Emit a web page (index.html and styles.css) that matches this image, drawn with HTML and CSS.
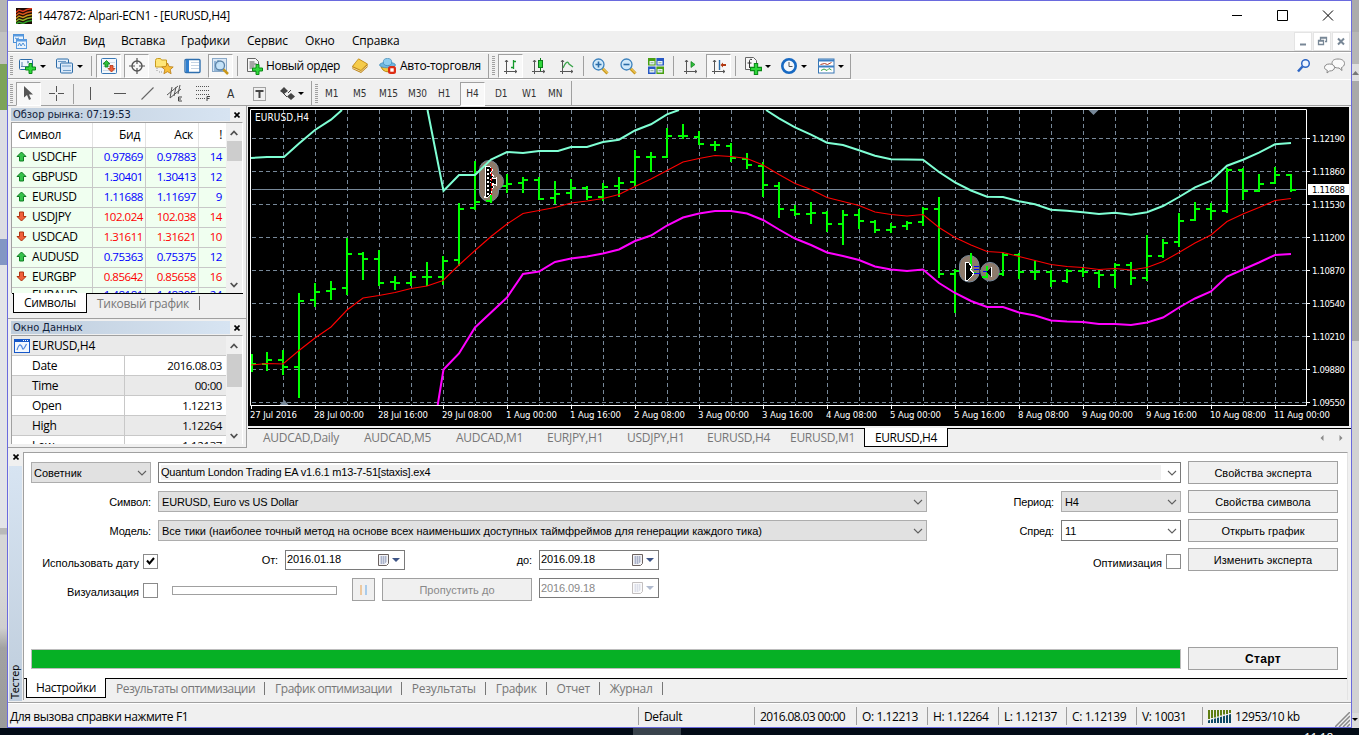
FILE: index.html
```
<!DOCTYPE html>
<html lang="ru">
<head>
<meta charset="utf-8">
<title>1447872: Alpari-ECN1 - [EURUSD,H4]</title>
<link rel="stylesheet" href="styles.css">
</head>
<body>
<svg width="0" height="0" class="defs">
  <defs>
    <symbol id="down" viewBox="0 0 6 3"><path d="M0 0h6L3 3z"/></symbol>
    <symbol id="chev" viewBox="0 0 10 6"><path d="M1 1l4 4 4-4" fill="none" stroke="#606060" stroke-width="1.1"/></symbol>
    <symbol id="sup" viewBox="0 0 8 6"><path d="M.7 5L4 1.5 7.300 5" fill="none" stroke="#505050" stroke-width="1.8"/></symbol>
    <symbol id="sdown" viewBox="0 0 8 6"><path d="M.7 1L4 4.500 7.300 1" fill="none" stroke="#505050" stroke-width="1.8"/></symbol>
    <symbol id="x" viewBox="0 0 6 6"><path d="M.5.5l5 5M5.500.5l-5 5" stroke="#000" stroke-width="1.6"/></symbol>
    <symbol id="up-ic" viewBox="0 0 11 11"><path d="M5.500 1L10 5.500H7.500V10H3.500V5.500H1z" fill="#35c24b" stroke="#0f7c22"/></symbol>
    <symbol id="dn-ic" viewBox="0 0 11 11"><path d="M5.500 10L10 5.500H7.500V1H3.500v4.500H1z" fill="#f0603a" stroke="#b03312"/></symbol>
    <symbol id="plus" viewBox="0 0 11 11"><path d="M4 .5h3V4h3.500v3H7v3.500H4V7H.5V4H4z" fill="#2fd63a" stroke="#0a8a17"/></symbol>
    <symbol id="cal" viewBox="0 0 11 12"><path d="M.5.500h10v9l-2 2h-8z" fill="#f3f3f6" stroke="#6b6260"/><path d="M2 3h7M2 5h7M2 7h7M2 9h5M3.500 2v8M5.500 2v8M7.500 2v7" stroke="#9aa4c0" stroke-width=".7"/></symbol>
    <symbol id="axes" viewBox="0 0 14 15"><path d="M2.500 1v14M0 12.500h13M1 3l1.500-2L4 3M11 11l2 1.500-2 1.500" fill="none" stroke="#555"/></symbol>
  </defs>
</svg>
<div class="desk">
  <div class="desk-left"><i class="d1"></i><i class="d2"></i><i class="d3"></i><i class="d4"></i><i class="d5"></i><i class="d6"></i><i class="d7"></i></div>
  <div class="window">
    <header class="title">
      <svg class="app" width="16" height="16" viewBox="0 0 16 16"><rect width="16" height="16" fill="#1b0a05"/><g fill="none" stroke-width="1.500"><path d="M0 4.500l3-2.500 4 1.500 4-2 5-1" stroke="#e23a1c"/><path d="M0 7.500l3-2.500 4 1.500 4-2 5-1" stroke="#d8541c"/><path d="M0 10.500l3-2.500 4 1.500 4-2 5-1" stroke="#c9931c"/><path d="M0 13.500l3-2.500 4 1.500 4-2 5-1" stroke="#8fb32a"/><path d="M0 16l3-2 4 1.500 4-2 5-1" stroke="#2fa02a"/></g></svg>
      <span class="cap">1447872: Alpari-ECN1 - [EURUSD,H4]</span>
      <svg class="winbtns" width="103" height="12" viewBox="0 0 103 12"><path d="M0 5.500h10M45.500.5h10v10h-10zM91 .5l10 10M101 .5l-10 10" fill="none" stroke="#000"/></svg>
    </header>
    <nav class="menu">
      <svg width="14" height="15" viewBox="0 0 14 15"><rect x=".5" y=".5" width="10" height="8" fill="#eaf3fc" stroke="#4b8fd6"/><rect x="3.500" y="5.500" width="10" height="9" fill="#eaf3fc" stroke="#5a9be0"/><path d="M.5 1.500h10M3.500 6.500h10" stroke="#5a9be0" stroke-width="2"/><path d="M5 12l1.500-3L8 12l2-3 2 3M2 4l2 1 2-1" fill="none" stroke="#4b8fd6"/></svg>
      <span>Файл</span><span>Вид</span><span>Вставка</span><span>Графики</span><span>Сервис</span><span>Окно</span><span>Справка</span>
      <b><svg width="17" height="17" viewBox="0 0 17 17"><path d="M5 11.500h6" stroke="#788796" stroke-width="2"/></svg></b>
      <b><svg width="17" height="17" viewBox="0 0 17 17"><path d="M6.500 7V4.500h6v4H11M6 5.200h7M4.500 7.500h5v4h-5zM4 8.200h6" fill="none" stroke="#788796" stroke-width="1.300"/></svg></b>
      <b><svg width="17" height="17" viewBox="0 0 17 17"><path d="M5 5.500l6 6M11 5.500l-6 6" stroke="#788796" stroke-width="2"/></svg></b>
    </nav>
    <div class="tb tb1">
      <i class="grip"></i>
      <svg width="18" height="17" viewBox="0 0 18 17"><rect x=".5" y="1.500" width="13" height="10" rx="1" fill="#eef5fc" stroke="#2d6ca8"/><path d="M3 4v5M2 8.500h9M8 3l2 1-2 1" fill="none" stroke="#5c87b0"/><use href="#plus" x="6" y="5" width="11" height="11"/></svg>
      <svg class="dd" width="6" height="3"><use href="#down"/></svg>
      <svg width="18" height="17" viewBox="0 0 18 17"><rect x=".5" y="1" width="12" height="9" rx="1" fill="#e3eefa" stroke="#2d6ca8"/><rect x="4.500" y="5" width="12" height="10" rx="1" fill="#dbe9f8" stroke="#2d6ca8"/><path d="M6 8h9M7 12.500h8M2 3.500h8" stroke="#6e9cc8"/></svg>
      <svg class="dd" width="6" height="3"><use href="#down"/></svg>
      <i class="sep"></i>
      <span class="on"><svg width="16" height="16" viewBox="0 0 16 16"><rect x=".5" y=".5" width="15" height="15" rx="1" fill="#f4f8fc" stroke="#3877b4"/><path d="M2 4.500h12M2 8.500h12M2 12.500h12" stroke="#d0dbe6"/><path d="M5.500 2.500L9 6H7v3H4V6H2z" fill="#2fbf3b" stroke="#0b7c18" stroke-width=".8"/><path d="M10.500 14L14 10.500h-2v-3H9v3H7z" fill="#f0603a" stroke="#b03312" stroke-width=".8"/></svg></span>
      <span class="on"><svg width="16" height="16" viewBox="0 0 16 16"><circle cx="8" cy="8" r="5" fill="none" stroke="#555" stroke-width="1.400"/><path d="M8 0v6M8 10v6M0 8h6M10 8h6" stroke="#555" stroke-width="1.200"/></svg></span>
      <svg width="19" height="17" viewBox="0 0 19 17"><path d="M.5 2.500q0-2 2-2h3l1 1.500h5v7H.5z" fill="#ffe678" stroke="#c89b1e"/><path d="M2 10v4M4 14h3" stroke="#999" stroke-dasharray="1 1"/><path d="M12.500 5l1.700 3.600 4 .4-3 2.700.9 4-3.600-2-3.600 2 .9-4-3-2.700 4-.4z" fill="#f8bf3a" stroke="#b87a12" stroke-width=".8"/></svg>
      <svg width="17" height="16" viewBox="0 0 17 16"><rect x="1" y="1.500" width="15" height="13" rx="1" fill="#fff" stroke="#2f6fae" stroke-width="1.400"/><path d="M3.500 2v12" stroke="#2f7fd0" stroke-width="3"/><path d="M7 4.500h8M7 7.500h8M7 10.500h8" stroke="#c5d4e4"/></svg>
      <span class="on"><svg width="17" height="17" viewBox="0 0 17 17"><rect x=".5" y=".5" width="14" height="13" fill="#dbe8f5" stroke="#8aa9c8"/><path d="M3 3v8M6 2v4M2 12h11" stroke="#4b84bb"/><path d="M11 11l5 5" stroke="#c9971a" stroke-width="2.500"/><circle cx="8" cy="7.500" r="4.500" fill="#bfe0f8" fill-opacity=".85" stroke="#5d84a8" stroke-width="1.300"/></svg></span>
      <i class="sep"></i>
      <svg width="17" height="17" viewBox="0 0 17 17"><path d="M.5.5h8l3 3v10H.5z" fill="#f7f7f7" stroke="#666"/><path d="M2.500 4h5M2.500 6h7M2.500 8h5M2.500 10h4" stroke="#555"/><use href="#plus" x="5" y="6" width="11" height="11"/></svg>
      <span class="lbl order">Новый ордер</span>
      <svg width="17" height="16" viewBox="0 0 17 16"><path d="M.5 8L7 1l8.500 5v3L9 15l-8.500-4z" fill="#b97d12"/><path d="M.5 8.500Q3 5 6.500.8L15.500 6 9 12.500z" fill="#f5cb4a" stroke="#b98212" stroke-width=".7"/><path d="M1 10l8 3.500L15 8" fill="none" stroke="#fff0b0" stroke-width=".8"/></svg>
      <svg width="18" height="17" viewBox="0 0 18 17"><path d="M2 9q3 7 12 4l1-5z" fill="#f3c63f" stroke="#b98a14"/><ellipse cx="8.500" cy="7" rx="8" ry="2.800" fill="#6fb7e0" stroke="#3b86b5" stroke-width=".7"/><ellipse cx="8.500" cy="4" rx="4.200" ry="3.600" fill="#8dcdf0" stroke="#3b86b5" stroke-width=".7"/><rect x="9" y="8" width="8" height="8" rx="2.500" fill="#dd2c14"/><rect x="11.300" y="10.300" width="3.400" height="3.400" fill="#fff"/></svg>
      <span class="lbl auto">Авто-торговля</span>
      <i class="sep tall"></i>
      <i class="grip"></i>
      <span class="on"><svg width="14" height="15" viewBox="0 0 14 15"><use href="#axes" width="14" height="15"/><path d="M9.500 1v9M7 8.500h2.500M9.500 2.500H12" stroke="#159a2c" stroke-width="1.300"/></svg></span>
      <svg width="14" height="17" viewBox="0 0 14 17"><use href="#axes" y="1" width="14" height="15"/><path d="M8.500 0v13" stroke="#0b7c18"/><rect x="6.500" y="2.500" width="4" height="7" fill="#2fd63a" stroke="#0b7c18"/></svg>
      <svg width="14" height="15" viewBox="0 0 14 15"><use href="#axes" width="14" height="15"/><path d="M3 9q4-9 6-4l4 3" fill="none" stroke="#3aa34a" stroke-width="1.300"/></svg>
      <i class="sep"></i>
      <svg width="17" height="17" viewBox="0 0 17 17"><path d="M10 10l5.500 5.500" stroke="#c9971a" stroke-width="3"/><path d="M10.500 10l5 5" stroke="#ffe07a"/><circle cx="6.500" cy="6.500" r="5.500" fill="#cfe9fa" stroke="#3d82bd" stroke-width="1.300"/><path d="M3.500 6.500h6M6.500 3.500v6" stroke="#2a6ca8" stroke-width="1.600"/></svg>
      <svg width="17" height="17" viewBox="0 0 17 17"><path d="M10 10l5.500 5.500" stroke="#c9971a" stroke-width="3"/><path d="M10.500 10l5 5" stroke="#ffe07a"/><circle cx="6.500" cy="6.500" r="5.500" fill="#cfe9fa" stroke="#3d82bd" stroke-width="1.300"/><path d="M3.500 6.500h6" stroke="#2a6ca8" stroke-width="1.600"/></svg>
      <svg width="16" height="16" viewBox="0 0 16 16"><path d="M0 0h7.600v7.600H0zM8.400 8.400H16V16H8.400z" fill="#48a012"/><path d="M8.400 0H16v7.600H8.400zM0 8.400h7.600V16H0z" fill="#2758c4"/><path d="M1.500 3h5v3.500h-5zM9.500 3h5v3.500h-5zM1.500 11h5v3.500h-5zM9.500 11h5v3.500h-5z" fill="#e9f1f8"/><path d="M2.500 4.700h3M10.500 4.700h3M2.500 12.700h3M10.500 12.700h3" stroke="#8fb090"/></svg>
      <i class="sep"></i>
      <svg width="14" height="15" viewBox="0 0 14 15"><use href="#axes" width="14" height="15"/><path d="M7 2.500v6L11 5.500z" fill="#2fbf3b" stroke="#0b7c18" stroke-width=".7"/></svg>
      <span class="on"><svg width="14" height="15" viewBox="0 0 14 15"><use href="#axes" width="14" height="15"/><path d="M7.500 1v10" stroke="#2a6ca8" stroke-width="1.400"/><path d="M8.500 6L11 3.500V5h3v2h-3v1.500z" fill="#b23a12"/></svg></span>
      <i class="sep"></i>
      <svg width="17" height="18" viewBox="0 0 17 18"><path d="M.5.500h8l3 3v9H.5z" fill="#f7f7f7" stroke="#666"/><path d="M7 2.500q-2-1-2.500 1V11M2.500 6h4" fill="none" stroke="#333"/><use href="#plus" x="5" y="6" width="12" height="12"/></svg>
      <svg class="dd" width="6" height="3"><use href="#down"/></svg>
      <svg width="16" height="16" viewBox="0 0 16 16"><circle cx="8" cy="8" r="6.700" fill="#f3f8fd" stroke="#1769c2" stroke-width="2.600"/><path d="M8 4v4.500h3.500" fill="none" stroke="#555"/></svg>
      <svg class="dd" width="6" height="3"><use href="#down"/></svg>
      <svg width="17" height="16" viewBox="0 0 17 16"><rect x=".5" y="1" width="15.500" height="14" fill="#fff" stroke="#3877b4"/><path d="M.5 2.500h15.500M.5 8.500h15.500" stroke="#3a7fc4" stroke-width="1.800"/><path d="M2.500 6.500l4-1 3 1 4-2" fill="none" stroke="#b0402a"/><path d="M3 12.500l3-1.500 3 1.500 2-2 2.500 1.500" fill="none" stroke="#37a545"/></svg>
      <svg class="dd" width="6" height="3"><use href="#down"/></svg>
      <i class="sep tall"></i>
      <svg width="14" height="14" viewBox="0 0 14 14"><circle cx="8.500" cy="4.500" r="3.800" fill="#eef5ff" stroke="#2e66c4" stroke-width="1.500"/><path d="M5.500 7.500L1 12.500" stroke="#2e66c4" stroke-width="2.500"/></svg>
      <svg width="22" height="16" viewBox="0 0 22 16"><path d="M14 1c4 0 6.500 1.800 6.500 4.500 0 2-1.500 3.500-3 4l.5 3-3-2.500c-4 0-7-1.500-7-4.500S10 1 14 1z" fill="#fafafa" stroke="#888"/><path d="M5.500 6c3 0 5 1.300 5 3.500s-2 3.500-5 3.500l-2.500 2 .3-2.700C1.500 11.500.5 10.800.5 9.500.5 7.300 2.500 6 5.500 6z" fill="#fafafa" stroke="#888"/></svg>
    </div>
    <div class="tb tb2">
      <i class="grip"></i>
      <span class="on"><svg width="10" height="15" viewBox="0 0 10 15"><path d="M0 0v11.500l3-2.500 2 5 2-1-2-4.500h4z" fill="#555"/></svg></span>
      <svg width="15" height="15" viewBox="0 0 15 15"><path d="M7.500 0v6M7.500 9v6M0 7.500h6M9 7.500h6" stroke="#555"/></svg>
      <i class="sep"></i>
      <svg width="2" height="13" viewBox="0 0 2 13"><path d="M.5 0v13" stroke="#555"/></svg>
      <svg width="12" height="2" viewBox="0 0 12 2"><path d="M0 .5h12" stroke="#555"/></svg>
      <svg width="13" height="13" viewBox="0 0 13 13"><path d="M.5 12.500l12-12" stroke="#666" stroke-width="1.100"/></svg>
      <svg width="17" height="17" viewBox="0 0 17 17"><path d="M0 10L11 1M3 13L14 4M3 13l2-11M7 11l2-9M11 9l2-9" stroke="#555"/><path d="M15 12h-3.500v4H15M11.500 14H14" fill="none" stroke="#444"/></svg>
      <svg width="15" height="17" viewBox="0 0 15 17"><path d="M0 1.500h14M0 5.500h14M0 9.500h14M0 13.500h9" stroke="#555" stroke-dasharray="1 1"/><path d="M14 11.500h-3V16M11 13.500h2.500" fill="none" stroke="#444"/></svg>
      <span class="tf glyphA">A</span>
      <svg width="13" height="14" viewBox="0 0 13 14"><rect x=".5" y=".5" width="12" height="13" fill="none" stroke="#555" stroke-dasharray="1 1"/><path d="M2.500 4h8M6.500 4v7" stroke="#444" stroke-width="2"/></svg>
      <svg width="15" height="13" viewBox="0 0 15 13"><path d="M4 0l4 4-4 3-4-3zM11 6l4 3.500-4 3.500-4-3.500z" fill="#444"/><path d="M3 6l4 4M8 6l3-3" fill="none" stroke="#444"/></svg>
      <svg class="dd" width="6" height="3"><use href="#down"/></svg>
      <i class="sep tall"></i>
      <i class="grip"></i>
      <span class="tf">M1</span><span class="tf">M5</span><span class="tf">M15</span><span class="tf">M30</span><span class="tf">H1</span><span class="tf on">H4</span><span class="tf">D1</span><span class="tf">W1</span><span class="tf">MN</span>
      <i class="sep tall"></i>
    </div>
    <main class="work">
      <aside class="docks">
        <section class="dock market">
          <h2><span>Обзор рынка: 07:19:53</span><svg width="6" height="6"><use href="#x"/></svg></h2>
          <div class="box">
            <div class="rows">
              <div class="hd"><span>Символ</span><span>Бид</span><span>Аск</span><span>!</span></div>
              <div class="r up"><span><svg width="11" height="11"><use href="#up-ic"/></svg>USDCHF</span><span>0.97869</span><span>0.97883</span><span>14</span></div>
              <div class="r up"><span><svg width="11" height="11"><use href="#up-ic"/></svg>GBPUSD</span><span>1.30401</span><span>1.30413</span><span>12</span></div>
              <div class="r up"><span><svg width="11" height="11"><use href="#up-ic"/></svg>EURUSD</span><span>1.11688</span><span>1.11697</span><span>9</span></div>
              <div class="r dn"><span><svg width="11" height="11"><use href="#dn-ic"/></svg>USDJPY</span><span>102.024</span><span>102.038</span><span>14</span></div>
              <div class="r dn"><span><svg width="11" height="11"><use href="#dn-ic"/></svg>USDCAD</span><span>1.31611</span><span>1.31621</span><span>10</span></div>
              <div class="r up"><span><svg width="11" height="11"><use href="#up-ic"/></svg>AUDUSD</span><span>0.75363</span><span>0.75375</span><span>12</span></div>
              <div class="r dn"><span><svg width="11" height="11"><use href="#dn-ic"/></svg>EURGBP</span><span>0.85642</span><span>0.85658</span><span>16</span></div>
              <div class="r up last"><span>EURAUD</span><span>1.48181</span><span>1.48205</span><span>24</span></div>
            </div>
            <div class="sb"><svg width="8" height="6"><use href="#sup"/></svg><i></i><svg width="8" height="6"><use href="#sdown"/></svg></div>
          </div>
          <div class="tabs"><b>Символы</b><span>Тиковый график</span></div>
        </section>
        <section class="dock data">
          <h2><span>Окно Данных</span><svg width="6" height="6"><use href="#x"/></svg></h2>
          <div class="box">
            <div class="rows">
              <div class="dh"><svg width="16" height="14" viewBox="0 0 16 14"><rect x=".5" y=".5" width="15" height="13" fill="#f3f8ff" stroke="#1758c8"/><path d="M0 1.500h16" stroke="#1758c8" stroke-width="3"/><path d="M9 1.500h6" stroke="#fff" stroke-dasharray="1 1"/><path d="M3 11q2-6 3.500-5t2 3.500 4-4.500" fill="none" stroke="#4f86dc" stroke-width="1.200"/></svg>EURUSD,H4</div>
              <div class="dr"><span>Date</span><span>2016.08.03</span></div>
              <div class="dr alt"><span>Time</span><span>00:00</span></div>
              <div class="dr"><span>Open</span><span>1.12213</span></div>
              <div class="dr alt"><span>High</span><span>1.12264</span></div>
              <div class="dr"><span>Low</span><span>1.12137</span></div>
            </div>
            <div class="sb"><svg width="8" height="6"><use href="#sup"/></svg><i></i><svg width="8" height="6"><use href="#sdown"/></svg></div>
          </div>
        </section>
      </aside>
      <section class="charts">
        <svg class="chart" width="1101" height="319" viewBox="248 107 1101 319">
          <rect x="248" y="107" width="1101" height="319"/>
          <g stroke="#778899" fill="none">
            <path stroke-dasharray="4 3" d="M252 138.500H1306M252 171.500H1306M252 204.500H1306M252 237.500H1306M252 270.500H1306M252 303.500H1306M252 336.500H1306M252 369.500H1306M252 402.500H1306"/>
            <path stroke-dasharray="4 3" d="M283.500 110V405M315.500 110V405M347.500 110V405M379.500 110V405M411.500 110V405M443.500 110V405M475.500 110V405M507.500 110V405M539.500 110V405M571.500 110V405M603.500 110V405M635.500 110V405M667.500 110V405M699.500 110V405M731.500 110V405M763.500 110V405M795.500 110V405M827.500 110V405M859.500 110V405M891.500 110V405M923.500 110V405M955.500 110V405M987.500 110V405M1019.500 110V405M1051.500 110V405M1083.500 110V405M1115.500 110V405M1147.500 110V405M1179.500 110V405M1211.500 110V405M1243.500 110V405M1275.500 110V405"/>
            <path d="M252 189.500H1307"/>
          </g>
          <path d="M279.500 405l5-5 4 5zM1088.500 110h10l-5 5z" fill="#778899"/>
          <g stroke="#00ff00" stroke-width="2">
            <path d="M252 354V372M252 364h4M267 352V371M262 364h5M267 360h5M283 350V375M278 360h5M283 367h5M299 293V398M294 367h5M299 301h5M315 283V307M310 300h5M315 292h5M331 281V300M326 291h5M331 289h5M347 238V295M342 288h5M347 254h5M363 252V280M358 254h5M363 259h5M379 250V286M374 259h5M379 283h5M395 276V290M390 282h5M395 283h5M411 272V286M406 283h5M411 277h5M427 262V286M422 277h10M443 256V285M438 277h5M443 261h5M459 203V266M454 260h5M459 209h5M475 161V210M470 208h5M475 202h5"/>
            <path d="M507 174V193M502 186h5M507 184h5M523 177V193M518 183h5M523 180h5M539 177V200M534 180h5M539 199h5M555 181V204M550 198h5M555 194h5M571 179V199M566 193h5M571 188h5M587 186V200M582 188h5M587 197h5M603 183V201M598 197h5M603 187h5M619 177V197M614 186h5M619 183h5M635 150V186M630 182h5M635 157h5M651 152V172M646 157h10M667 128V158M662 157h5M667 136h5M683 124V139M678 136h10M699 131V145M694 137h5M699 144h5M715 141V151M710 145h10M731 143V162M726 146h5M731 158h5M747 153V169M742 159h5M747 165h5M763 162V197M758 166h5M763 185h5M779 182V218M774 186h5M779 209h5M795 205V216M790 210h5M795 214h5M811 202V224M806 214h5M811 213h5M827 211V232M822 213h5M827 224h5M843 210V245M838 224h5M843 215h5M859 209V229M854 215h5M859 221h5M875 220V233M870 222h5M875 230h5M891 223V233M886 230h5M891 227h5M907 221V230M902 226h5M907 223h5M923 207V226M918 222h5M923 209h5M939 197V278M934 209h5M939 274h5M955 269V313M950 274h5M955 271h5"/>
            <path d="M1003 253V276M998 274h5M1003 255h5M1019 253V279M1014 255h5M1019 272h5M1035 261V280M1030 272h10M1051 270V287M1046 272h5M1051 281h5M1067 269V283M1062 281h5M1067 271h5M1083 267V277M1078 271h5M1083 272h5M1099 270V288M1094 273h5M1099 275h5M1115 263V288M1110 275h5M1115 265h5M1131 262V285M1126 265h5M1131 278h5M1147 235V281M1142 278h5M1147 256h5M1163 239V258M1158 256h5M1163 243h5M1179 213V247M1174 242h5M1179 221h5M1195 202V221M1190 220h5M1195 209h5M1211 203V220M1206 209h5M1211 211h5M1227 168V213M1222 211h5M1227 170h5M1243 168V200M1238 170h5M1243 191h5M1259 174V192M1254 191h5M1259 184h5M1275 167V184M1270 183h5M1275 175h5M1291 174V192M1286 175h5M1291 190h5"/>
          </g>
          <g fill="#8d7a6b" stroke="#778899">
            <circle cx="494.500" cy="181.500" r="9"/>
            <rect x="479.500" y="160.500" width="19" height="41" rx="9.500"/>
            <rect x="959.500" y="255.500" width="19.500" height="26.500" rx="9.700"/>
            <circle cx="990" cy="271.700" r="9.300"/>
          </g>
          <circle cx="494.500" cy="181.500" r="8.500" fill="#8d7a6b"/>
          <path d="M491 195v8M486 201h5M971 253v17M971 273h5M987 266v12M982 277h5" stroke="#00ff00" stroke-width="2"/>
          <g shape-rendering="crispEdges">
            <path d="M486 166h3l4 4-3 3 4 3-3 3 5-1v7l-5-2 3 4-3 3 1 3-4 4h-3z" fill="#000" stroke="#fff"/>
            <path d="M488 169v26" stroke="#fff" stroke-width="2" stroke-dasharray="2 2"/>
            <path d="M491.500 168v27" stroke="#f00" stroke-dasharray="3 2"/>
            <path d="M965 262h3l4 5-2 3 4 3-2 3-4 4h-3z" fill="#000" stroke="#fff"/>
            <path d="M974 266h5M974 269h5M974 273h6M983 271h4" stroke="#00f"/>
            <path d="M991 268l-5 4 5 5z" fill="#000"/><path d="M991.500 267v10" stroke="#fff"/>
          </g>
          <g fill="none">
            <path stroke="#ff0000" stroke-width="1.100" d="M251 365L267 363.500 283 364 299 350.500 315 338 331 327 347 310 363 298 379 295.500 395 292.500 411 288.500 427 286 443 280.500 459 265 475 250.500 491 236.500 507 224 523 213.500 539 210.500 555 207.500 571 203 587 201 603 198.500 619 194.500 635 186.500 651 179 667 170.500 683 162 699 158.500 715 155.500 731 156.500 747 158.500 763 165 779 174.500 795 183.500 811 189.500 827 197.500 843 201.500 859 205.500 875 212 891 214.500 907 216 923 214.500 939 227.500 955 237.500 971 245 987 251.500 1003 252.500 1019 256.500 1035 260.500 1051 264.500 1067 266.500 1083 267.500 1099 269.500 1115 268.500 1131 270 1147 267.500 1163 261.500 1179 252.500 1195 243 1211 235 1227 221.500 1243 214 1259 207.500 1275 200.500 1291 198.500"/>
            <path stroke="#7fffd4" stroke-width="2" d="M251 158L267 157 284 157 299 143.500 315 130 331 119.700 342 110M427.500 110L443.500 191 459 175 475 175 491 159.500 507 152 523 153 539 151 558 151 571 147 587 147 603 142 619 139.700 635 130.500 651 124.300 667 114.300 679 110M766 110L779 118.300 795 127.300 811 134.700 827 142.700 843 145 859 150.300 875 155.700 891 159.300 923 159.700 939 172 955 182.300 971 190.500 987 196.700 1003 197 1019 201.300 1035 204.300 1051 209.700 1067 210.700 1083 212.300 1099 214 1115 212.700 1131 214.700 1147 212.300 1163 206 1179 197 1195 187.300 1211 180.700 1227 165.700 1243 159.700 1259 152.700 1275 144.300 1291 143"/>
            <path stroke="#ff00ff" stroke-width="2" d="M437.700 405L443.500 369.500 459 353.500 475 327.500 491 312.500 507 297.500 523 274 539 271.500 555 262 571 258.500 587 256.500 603 253.500 619 249.500 635 241 651 235.500 667 225.500 683 217.500 699 213.500 715 211 731 211 747 213.500 763 220 779 229.500 795 238.500 811 245 827 252.500 843 256 859 260 875 266.500 891 269.500 907 271 923 269.500 939 283 955 293 971 301 987 307 1003 307 1019 312.500 1035 315.500 1051 320.500 1067 321.500 1083 322 1099 324 1115 324 1131 325 1147 322.500 1163 317.500 1179 307.500 1195 298.500 1211 291.500 1227 276.500 1243 269.500 1259 262.500 1275 255 1291 254"/>
            <path stroke="#fff" d="M250.500 109.500H1306.500V405.500H250.500z"/>
            <path stroke="#fff" d="M251.500 406v3M315.500 406v3M379.500 406v3M443.500 406v3M507.500 406v3M571.500 406v3M635.500 406v3M699.500 406v3M763.500 406v3M827.500 406v3M891.500 406v3M955.500 406v3M1019.500 406v3M1083.500 406v3M1147.500 406v3M1211.500 406v3M1275.500 406v3M1307 138.500h3M1307 171.500h3M1307 204.500h3M1307 237.500h3M1307 270.500h3M1307 303.500h3M1307 336.500h3M1307 369.500h3M1307 402.500h3"/>
          </g>
          <rect x="1308" y="184" width="41" height="11" fill="#fff"/>
          <g class="ct">
            <text x="255" y="121" textLength="54" class="sym">EURUSD,H4</text>
            <text x="250" y="418" textLength="47">27 Jul 2016</text><text x="314" y="418" textLength="50">28 Jul 00:00</text><text x="378" y="418" textLength="50">28 Jul 16:00</text><text x="442" y="418" textLength="50">29 Jul 08:00</text><text x="506" y="418" textLength="51">1 Aug 00:00</text><text x="570" y="418" textLength="51">1 Aug 16:00</text><text x="634" y="418" textLength="51">2 Aug 08:00</text><text x="698" y="418" textLength="51">3 Aug 00:00</text><text x="762" y="418" textLength="51">3 Aug 16:00</text><text x="826" y="418" textLength="51">4 Aug 08:00</text><text x="890" y="418" textLength="51">5 Aug 00:00</text><text x="954" y="418" textLength="51">5 Aug 16:00</text><text x="1018" y="418" textLength="51">8 Aug 08:00</text><text x="1082" y="418" textLength="51">9 Aug 00:00</text><text x="1146" y="418" textLength="51">9 Aug 16:00</text><text x="1210" y="418" textLength="56">10 Aug 08:00</text><text x="1274" y="418" textLength="56">11 Aug 00:00</text>
            <text x="1312" y="142" textLength="33">1.12190</text><text x="1312" y="175" textLength="33">1.11860</text><text x="1312" y="208" textLength="33">1.11530</text><text x="1312" y="241" textLength="33">1.11200</text><text x="1312" y="274" textLength="33">1.10870</text><text x="1312" y="307" textLength="33">1.10540</text><text x="1312" y="340" textLength="33">1.10210</text><text x="1312" y="373" textLength="33">1.09880</text><text x="1312" y="406" textLength="33">1.09550</text>
            <text x="1312" y="193" textLength="33" class="cur">1.11688</text>
          </g>
        </svg>
        <div class="ctabs"><span>AUDCAD,Daily</span><span>AUDCAD,M5</span><span>AUDCAD,M1</span><span>EURJPY,H1</span><span>USDJPY,H1</span><span>EURUSD,H4</span><span>EURUSD,M1</span><b>EURUSD,H4</b><svg width="23" height="6" viewBox="0 0 23 6"><path d="M3.500 0v6L.5 3zM19.500 0v6l3-3z" fill="#8a8a8a"/></svg></div>
      </section>
    </main>
    <section class="tester">
      <div class="side"><svg width="6" height="6"><use href="#x"/></svg><div><span>Тестер</span></div></div>
      <div class="pane">
        <div class="form">
          <div class="fr f1"><div class="combo adv">Советник<svg width="10" height="6"><use href="#chev"/></svg></div><div class="combo edit wide"><span>Quantum London Trading EA v1.6.1 m13-7-51[staxis].ex4</span><svg width="10" height="6"><use href="#chev"/></svg></div><button>Свойства эксперта</button></div>
          <div class="fr f2"><label>Символ:</label><div class="combo c2">EURUSD, Euro vs US Dollar<svg width="10" height="6"><use href="#chev"/></svg></div><label>Период:</label><div class="combo c2">H4<svg width="10" height="6"><use href="#chev"/></svg></div><button>Свойства символа</button></div>
          <div class="fr f2"><label>Модель:</label><div class="combo c2 model">Все тики (наиболее точный метод на основе всех наименьших доступных таймфреймов для генерации каждого тика)<svg width="10" height="6"><use href="#chev"/></svg></div><label>Спред:</label><div class="combo c2 edit">11<svg width="10" height="6"><use href="#chev"/></svg></div><button>Открыть график</button></div>
          <div class="fr f4"><label class="ck">Использовать дату</label><i class="check"><svg width="9" height="9" viewBox="0 0 9 9"><path d="M1 3.500l2.500 3L8 1" fill="none" stroke="#000" stroke-width="2"/></svg></i><label>От:</label><div class="date"><span>2016.01.18</span><svg width="11" height="12"><use href="#cal"/></svg><svg class="dd" width="8" height="4"><use href="#down"/></svg></div><label>до:</label><div class="date"><span>2016.09.18</span><svg width="11" height="12"><use href="#cal"/></svg><svg class="dd" width="8" height="4"><use href="#down"/></svg></div><label class="ck">Оптимизация</label><i class="check"></i><button>Изменить эксперта</button></div>
          <div class="fr f5"><label class="ck">Визуализация</label><i class="check"></i><i class="slider"></i><button class="pause"><i></i><i></i></button><button class="skip">Пропустить до</button><div class="date off"><span>2016.09.18</span><svg width="11" height="12"><use href="#cal"/></svg><svg class="dd" width="8" height="4"><use href="#down"/></svg></div></div>
          <div class="fr f6"><i class="prog"></i><button class="start">Старт</button></div>
        </div>
        <div class="ttabs"><b>Настройки</b><span>Результаты оптимизации</span><span>График оптимизации</span><span>Результаты</span><span>График</span><span>Отчет</span><span>Журнал</span></div>
      </div>
    </section>
    <footer class="status"><span>Для вызова справки нажмите F1</span><span>Default</span><span class="when">2016.08.03 00:00</span><span>O: 1.12213</span><span>H: 1.12264</span><span>L: 1.12137</span><span>C: 1.12139</span><span>V: 10031</span><span class="conn"><svg width="23" height="13" viewBox="0 0 23 13"><path d="M1 0v13M4 0v13M7 0v13M10 0v13M13 0v13M16 0v13M19 0v13M22 0v13" stroke="#0e4a66" stroke-width="2"/><path d="M0 0h23v4L0 10.500z" fill="#efefef"/><path d="M1 0v9M4 0v8M7 0v7.500M10 0v6.500M13 0v5.500M16 0v4.500M19 0v4M22 0v3" stroke="#5f7d12" stroke-width="2"/></svg>12953/10 kb</span>
      <svg class="size" width="15" height="15" viewBox="0 0 15 15"><path d="M0 15L15 0M4 15L15 4M8 15l7-7M12 15l3-3" stroke="#8a8a8a" stroke-width="1.500"/></svg></footer>
  </div>
  <div class="desk-right"><i class="e1"></i><i class="e2"></i><i class="e3"><svg width="7" height="4"><path d="M0 4l3.500-4L7 4z" fill="#777"/></svg></i><i class="e4"></i><i class="e5"></i><i class="e6"><svg width="6" height="3"><use href="#down"/></svg></i></div>
</div>
<div class="taskbar"><i></i><span>11:18</span></div>
</body>
</html>
```
FILE: styles.css
```
* { box-sizing: border-box; }
body { margin: 0; width: 1359px; height: 735px; overflow: hidden; background: #020b16; font: 12px/16px "Open Sans", "Noto Sans", sans-serif; letter-spacing: -0.3px; color: #000; }
i { font-style: normal; display: block; }
svg { display: block; flex: none; }
.defs { position: absolute; }
span, label, b, button { white-space: nowrap; }

.desk { display: flex; height: 728px; }
.desk-left { width: 7px; display: flex; flex-direction: column; }
.desk-right { width: 7px; display: flex; flex-direction: column; }
.d1 { height: 32px; background: #b4b4b4; }
.d2 { height: 32px; background: #c2c2c2; }
.d3 { height: 46px; background: #7da35a; }
.d4 { height: 129px; background: #dcdde3; }
.d5 { height: 26px; background: #8396c4; }
.d6 { height: 263px; background: #e3e4e8; }
.d7 { height: 200px; background: linear-gradient(#b9b9b9 0 6px, #d6d6d6 7px 60px, #cfcfcf 100px, #a2a2a2 120px, #9b9b9b); }
.e1 { height: 32px; background: #ababab; }
.e2 { height: 32px; background: #b6b6b6; }
.e3 { height: 17px; background: #dedede; padding-top: 7px; }
.e4 { height: 260px; background: #a9a9a9; }
.e5 { height: 372px; background: #d2d2d2; }
.e6 { height: 15px; background: #dcdcdc; padding-top: 5px; }

.taskbar { height: 7px; overflow: hidden; display: flex; justify-content: space-between; padding: 0 26px 0 633px; background: #020b16; }
.taskbar i { width: 48px; height: 7px; background: #39434c; }
.taskbar span { color: #fff; line-height: 16px; padding-top: 2px; }

.window { width: 1345px; height: 728px; border: 1px solid #6a6ade; background: #f0f0f0; display: flex; flex-direction: column; }
.title { height: 30px; background: #fff; display: flex; align-items: center; padding: 0 16px 0 8px; }
.cap { margin-left: 5px; font-size: 12px; letter-spacing: -0.34px; flex: 1; }

.menu { height: 21px; border-bottom: 1px solid #a0a0a0; display: grid; grid-template-columns: 23px 47px 38px 60px 66px 58px 47px 942px 19px 19px 19px; align-items: center; padding-left: 5px; }
.menu > span { letter-spacing: -0.2px; }
.menu b { width: 18px; height: 19px; background: #fff; border: 1px solid #e4e4e4; }

.tb { display: grid; align-items: center; padding-left: 2px; height: 27px; border-top: 1px solid #fff; background: no-repeat 0 100% / 843px 1px linear-gradient(#a0a0a0, #a0a0a0); }
.tb1 { grid-template-columns: 9px 21px 16px 21px 14px 5px 28px 31px 29px 24px 29px 10px 19px 86px 27px 21px 88px 4px 6px 34px 28px 23px 9px 28px 28px 25px 11px 22px 29px 10px 20px 16px 20px 17px 20px 12px 447px 27px 22px; }
.tb2 { grid-template-columns: 6px 33px 24px 17px 24px 27px 26px 29px 31px 26px 27px 18px 13px 4px 10px 28px 26px 29px 30px 22px 35px 27px 26px 23px 1px; padding-top: 1px; background: none; border-bottom: 1px solid #a0a0a0; }
.grip { width: 3px; height: 20px; background: repeating-linear-gradient(#a0a0a0 0 1px, #f0f0f0 1px 2px); }
.sep { width: 1px; height: 20px; background: #a0a0a0; }
.sep.tall { height: 25px; }
.on { width: 25px; height: 24px; display: grid; place-items: center; background: #f8f8f8; border: 1px solid #fff; border-top-color: #a0a0a0; border-left-color: #a0a0a0; }
.order { letter-spacing: -0.4px; }
.auto { letter-spacing: -0.25px; }
.tf { font: 10px/14px "DejaVu Sans Condensed", "DejaVu Sans", sans-serif; font-stretch: condensed; letter-spacing: -0.1px; color: #333; }
.glyphA { font-size: 12px; color: #333; }

.work { display: flex; height: 342px; }
.docks { width: 239px; border-right: 1px solid #a0a0a0; display: flex; flex-direction: column; }
.dock { padding-left: 3px; border-bottom: 1px solid #a0a0a0; }
.market { height: 213px; padding-top: 2px; }
.data { height: 129px; padding-top: 2px; }
.dock h2 { margin: 0; height: 13px; font: 11px/13px "DejaVu Sans Condensed", sans-serif; font-stretch: condensed; letter-spacing: -0.2px; display: flex; align-items: center; color: #10203a; }
.dock h2 span { width: 219px; height: 13px; background: linear-gradient(90deg, #bfcddc, #d7e4f2); padding-left: 2px; letter-spacing: -0.02px; }
.dock h2 svg { margin-left: 4px; }
.box { margin-top: 1px; display: flex; width: 232px; border: 1px solid #a0a0a0; border-right-color: #fff; border-bottom: 0; overflow: hidden; }
.market .box { height: 171px; }
.data .box { height: 109px; }
.rows { width: 214px; background: #fff; }
.sb { width: 17px; display: flex; flex-direction: column; align-items: center; background: #f0f0f0; padding: 7px 0 5px; }
.sb i { width: 15px; background: #cdcdcd; }
.sb svg:last-child { margin-top: auto; }
.market .sb i { height: 20px; margin-top: 5px; }
.data .sb i { height: 33px; margin-top: 5px; }
.hd, .r { display: grid; grid-template-columns: 81px 53px 53px 27px; }
.hd { height: 25px; line-height: 24px; border-bottom: 1px solid #c8c8c8; }
.hd span { border-right: 1px solid #e3e3e3; text-align: right; padding-right: 5px; }
.hd span:first-child { text-align: left; padding-left: 6px; }
.r { height: 20px; line-height: 17px; background: #f0fff0; border-bottom: 1px solid #c8c8c8; text-align: right; font-size: 11.500px; letter-spacing: -0.45px; }
.r span { border-right: 1px solid #c8c8c8; padding-right: 2px; }
.r span:last-child, .hd span:last-child { border-right: 0; padding-right: 4px; }
.r span:first-child { display: flex; align-items: center; gap: 5px; padding: 0 0 2px 4px; color: #000; font-size: 12px; letter-spacing: -0.4px; }
.r.last { line-height: 13px; }
.r.last span:first-child { align-items: flex-start; padding-left: 20px; }
.up { color: #0000ff; }
.dn { color: #f00; }
.tabs { display: flex; width: 231px; margin-left: 1px; border-top: 1px solid #000; height: 20px; }
.tabs b { font-weight: normal; background: #fff; margin: -1px 0 0 1px; width: 74px; border: 1px solid #000; border-top: 0; text-align: center; line-height: 19px; }
.tabs span { color: #777; margin: 2px 0 3px 10px; padding-right: 10px; border-right: 1px solid #777; letter-spacing: -0.3px; line-height: 15px; }
.dh { height: 20px; background: #eaeaea; border-bottom: 1px solid #c8c8c8; display: flex; align-items: center; gap: 2px; padding-left: 2px; }
.dr { height: 20px; line-height: 19px; display: grid; grid-template-columns: 113px 101px; border-bottom: 1px solid #c8c8c8; font-size: 11.500px; letter-spacing: -0.3px; }
.dr.alt { background: #eaeaea; }
.dr span:first-child { border-right: 1px solid #c8c8c8; padding-left: 20px; font-size: 12px; }
.dr span:last-child { text-align: right; padding-right: 4px; letter-spacing: -0.4px; }

.charts { width: 1104px; padding: 1px 0 0 1px; background: #f0f0f0; }
.ct text { font: 9.500px "DejaVu Sans Condensed", sans-serif; font-stretch: condensed; fill: #fff; letter-spacing: 0; }
.ct .sym { font-size: 10px; }
.ct .cur { fill: #000; }
.ctabs { display: grid; grid-template-columns: 101px 92px 91px 80px 80px 83px 74px 84px 372px 23px; border-top: 1px solid #000; margin-top: 2px; padding-left: 15px; height: 19px; color: #777; align-items: center; letter-spacing: -0.28px; }
.ctabs b { margin-top: -1px; height: 19px; background: #fff; border: 1px solid #000; border-top: 0; font-weight: normal; color: #000; text-align: center; line-height: 19px; letter-spacing: -0.4px; }
.ctabs svg { grid-column: 10; }

.tester { display: flex; height: 255px; padding-top: 4px; border-bottom: 1px solid #a0a0a0; }
.side { width: 15px; padding: 2px 1px 0 1px; display: flex; flex-direction: column; align-items: center; }
.side div { margin-top: 6px; width: 13px; height: 235px; background: linear-gradient(#d7e4f2, #bfcddc); display: flex; align-items: flex-end; justify-content: center; padding-bottom: 2px; }
.side span { writing-mode: vertical-rl; transform: rotate(180deg); font: 11px/13px "DejaVu Sans Condensed", sans-serif; letter-spacing: -0.3px; }
.pane { width: 1325px; border-top: 1px solid #a0a0a0; border-left: 1px solid #a0a0a0; border-right: 1px solid #e3e3e3; height: 248px; }
.form { height: 225px; background: #fff; padding: 5px 0 0 7px; font: 11px/14px "Liberation Sans", Arial, sans-serif; letter-spacing: -0.15px; }
.fr { display: grid; height: 29px; align-items: center; }
.fr label { justify-self: end; margin-right: 7px; padding-top: 1px; }
.fr label.ck { margin-right: 4px; padding-top: 7px; letter-spacing: 0; }
.f1 { grid-template-columns: 127px 1030px 150px; }
.f2 { grid-template-columns: 127px 769px 134px 127px 150px; }
.f4 { grid-template-columns: 112px 15px 127px 120px 134px 120px 507px 22px 150px; }
.f5 { grid-template-columns: 112px 29px 180px 30px 157px 120px; }
.f6 { grid-template-columns: 1157px 150px; margin-top: 41px; }
.combo { width: 120px; height: 21px; background: #e1e1e1; border: 1px solid #adadad; display: flex; align-items: center; justify-content: space-between; padding: 0 3px; }
.adv { padding-left: 2px; letter-spacing: 0; }
.f2 .c2:nth-child(2) { width: 769px; }
.edit { background: #fff; border-color: #7a7a7a; }
.wide { width: 1023px; padding-left: 2px; }
.wide span { background: #f0f0f0; width: 1000px; height: 15px; line-height: 14px; letter-spacing: -0.2px; }
.model { letter-spacing: -0.03px; }
.fr button { width: 150px; height: 23px; padding: 0; border: 1px solid #a0a0a0; background: #f0f0f0; font: inherit; letter-spacing: 0.05px; color: #000; }
.check { width: 15px; height: 15px; margin-top: 4px; border: 1px solid #8a8a8a; background: #fff; padding: 2px; }
.date { width: 120px; height: 20px; border: 1px solid #7a7a7a; display: grid; grid-template-columns: 91px 14px 8px; align-items: center; padding-left: 1px; letter-spacing: -0.1px; }
.date span { padding-bottom: 1px; }
.date .dd { fill: #3d5486; }
.date.off { color: #888; margin-top: -1px; }
.date.off svg { opacity: .4; }
.slider { width: 165px; height: 9px; border: 1px solid #a0a0a0; margin-top: 4px; }
.fr .pause { width: 23px; margin-top: 2px; display: flex; justify-content: center; align-items: center; gap: 3px; }
.pause i { width: 2px; height: 10px; background: #a9cbea; }
.pause i:first-child { background: #ecc9a0; }
.fr .skip { color: #888; margin-top: 2px; }
.prog { width: 1150px; height: 20px; background: #06b025; border: 1px solid #bcbcbc; }
.fr .start { font-weight: bold; font-size: 12px; letter-spacing: 0.3px; }
.ttabs { display: flex; height: 22px; border-top: 1px solid #000; color: #777; padding-left: 2px; }
.ttabs b { width: 80px; height: 20px; margin-top: -1px; border: 1px solid #000; border-top: 0; background: #fff; color: #000; font-weight: normal; text-align: center; line-height: 20px; }
.ttabs span { margin: 3px 0 5px 10px; line-height: 13px; padding-right: 9px; border-right: 1px solid #777; letter-spacing: -0.3px; }
.ttabs span:nth-child(2), .ttabs span:nth-child(3) { letter-spacing: -0.48px; }

.status { flex: 1; display: grid; grid-template-columns: 630px 116px 102px 71px 71px 68px 70px 66px 133px 15px; align-items: center; border-top: 1px solid #fff; letter-spacing: -0.4px; padding-top: 1px; }
.status span { padding-left: 5px; border-left: 1px solid #a0a0a0; height: 18px; line-height: 19px; }
.status span:first-child { border: 0; padding-left: 2px; letter-spacing: -0.4px; }
.status .when { letter-spacing: -0.62px; }
.conn { display: flex; gap: 4px; align-items: center; }
.size { align-self: end; }
```
